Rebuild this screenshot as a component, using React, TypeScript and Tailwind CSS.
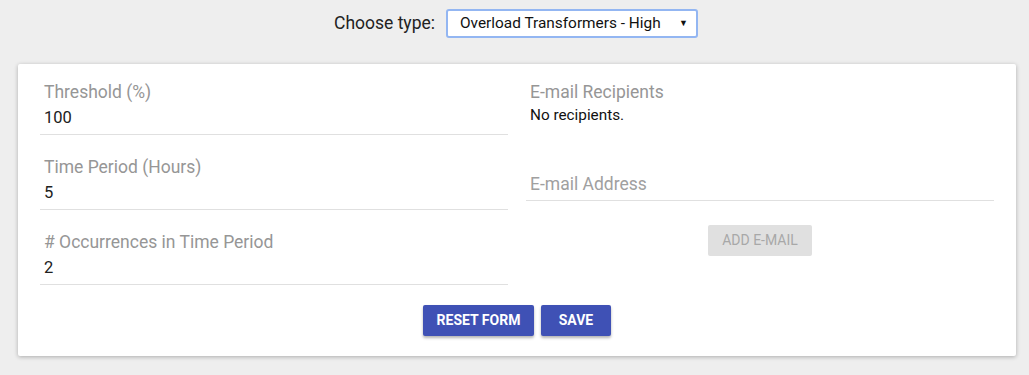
import React from "react";

const font = { fontFamily: "Roboto, 'Noto Sans', sans-serif" };

function Field({ label, value, first }: { label: string; value: string; first?: boolean }) {
  return (
    <div className={`${first ? "" : "mt-[23px]"} border-b border-[#e0e0e0] pb-[7px] px-[4px]`}>
      <div className="text-[17.5px] leading-[19px] text-[#969696]">{label}</div>
      <div className="mt-[6px] text-[16.5px] leading-[19px] text-[#212121]">{value}</div>
    </div>
  );
}

export default function App() {
  return (
    <div className="min-h-[375px] w-full bg-[#eeeeee] pt-[9px]" style={font}>
      <div className="flex items-center justify-center gap-[11px] pl-[3px]">
        <span className="text-[17.5px] leading-[29px] text-[#222222]">Choose type:</span>
        <div className="flex h-[29px] w-[252px] items-center justify-between rounded-[3px] border-2 border-[#93b6f2] bg-white pl-[12px] pr-[8px]">
          <span className="text-[15.4px] text-[#111111]">Overload Transformers - High</span>
          <span className="text-[9px] text-[#111111]">▼</span>
        </div>
      </div>

      <div className="ml-[18px] mt-[26px] w-[998px] rounded-[2px] bg-white px-[22px] pb-[20px] pt-[19px] shadow-[0_1px_4px_rgba(0,0,0,0.28)]">
        <div className="flex gap-[18px]">
          <div className="w-[468px]">
            <Field first label="Threshold (%)" value="100" />
            <Field label="Time Period (Hours)" value="5" />
            <Field label="# Occurrences in Time Period" value="2" />
          </div>
          <div className="w-[468px]">
            <div className="px-[4px]">
              <div className="text-[17.5px] leading-[19px] text-[#969696]">E-mail Recipients</div>
              <div className="mt-[5px] text-[15.3px] leading-[16px] text-[#111111]">No recipients.</div>
            </div>
            <div className="mt-[52px] border-b border-[#e0e0e0] px-[4px] pb-[6px]">
              <div className="text-[17.5px] leading-[19px] text-[#a0a0a0]">E-mail Address</div>
            </div>
            <div className="mt-[24px] flex justify-center">
              <div className="flex h-[31px] w-[104px] items-center justify-center rounded-[2px] bg-[#e0e0e0] text-[14px] text-[#a8a8a8]">
                ADD E-MAIL
              </div>
            </div>
          </div>
        </div>
        <div className="mt-[20px] flex justify-center gap-[7px]">
          <div className="flex h-[31px] w-[111px] items-center justify-center rounded-[2px] bg-[#3f51b5] text-[14px] font-bold text-white shadow-[0_2px_3px_rgba(0,0,0,0.3)]">
            RESET FORM
          </div>
          <div className="flex h-[31px] w-[70px] items-center justify-center rounded-[2px] bg-[#3f51b5] text-[14px] font-bold text-white shadow-[0_2px_3px_rgba(0,0,0,0.3)]">
            SAVE
          </div>
        </div>
      </div>
    </div>
  );
}
